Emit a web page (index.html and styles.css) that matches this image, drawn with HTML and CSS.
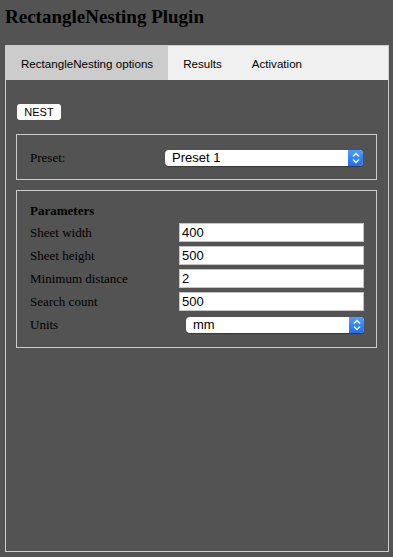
FILE: index.html
```html
<!DOCTYPE html>
<html lang="en">
<head>
  <meta charset="UTF-8">
  <meta name="viewport" content="width=device-width, initial-scale=1.0">
  <title>RectangleNesting Plugin</title>
  <link rel="stylesheet" href="styles.css">
</head>
<body>
  <h1 class="title">RectangleNesting Plugin</h1>

  <div class="panel">
    <!-- tabs -->
    <div class="tabs">
      <div class="tab active">RectangleNesting options</div>
      <div class="tab">Results</div>
      <div class="tab">Activation</div>
    </div>

    <div class="tab-body">
      <button class="btn">NEST</button>

      <!-- preset -->
      <fieldset class="group preset">
        <label>Preset:</label>
        <div class="select">
          <select>
            <option>Preset 1</option>
          </select>
          <span class="arrows">
            <svg width="8" height="12" viewBox="0 0 8 12"><path d="M1 4.5 L4 1.5 L7 4.5 M1 7.5 L4 10.5 L7 7.5" fill="none" stroke="#fff" stroke-width="1.4"/></svg>
          </span>
        </div>
      </fieldset>

      <!-- parameters -->
      <fieldset class="group params">
        <div class="head">Parameters</div>
        <div></div>
        <label>Sheet width</label>
        <input class="field" type="text" value="400">
        <label>Sheet height</label>
        <input class="field" type="text" value="500">
        <label>Minimum distance</label>
        <input class="field" type="text" value="2">
        <label>Search count</label>
        <input class="field" type="text" value="500">
        <label>Units</label>
        <div class="select units">
          <select>
            <option>mm</option>
          </select>
          <span class="arrows">
            <svg width="8" height="12" viewBox="0 0 8 12"><path d="M1 4.5 L4 1.5 L7 4.5 M1 7.5 L4 10.5 L7 7.5" fill="none" stroke="#fff" stroke-width="1.4"/></svg>
          </span>
        </div>
      </fieldset>
    </div>
  </div>
</body>
</html>
```

FILE: styles.css
```css
html, body {
  margin: 0;
  padding: 0;
}
body {
  background: #535353;
  padding: 5px 4px 5px 5px;
  font-family: "Liberation Serif", serif;
  font-size: 13px;
  color: #000;
}
.title {
  font-size: 19px;
  font-weight: bold;
  margin: 0 0 16px 0;
  line-height: 24px;
}
.panel {
  border: 1px solid #cccccc;
  height: 507px;
  box-sizing: border-box;
}
.tabs {
  display: flex;
  height: 34px;
  background: #f0f0f0;
  font-family: "Liberation Sans", sans-serif;
  font-size: 11.6px;
}
.tab {
  padding: 0 15px;
  display: flex;
  align-items: center;
}
.tab.active {
  background: #cccccc;
}
.tab-body {
  padding: 24px 11px 0 10px;
}
.btn {
  display: block;
  margin: 0 0 14px 1px;
  width: 44px;
  height: 16px;
  padding: 0;
  border: none;
  border-radius: 3px;
  background: #fff;
  font-family: "Liberation Sans", sans-serif;
  font-size: 11px;
  color: #000;
}
.group {
  margin: 0 0 10px 0;
  border: 1px solid #cccccc;
  min-width: 0;
  display: grid;
  align-items: center;
}
.preset {
  padding: 13px 13px 12px 13px;
  grid-template-columns: 135px 198px;
  grid-auto-rows: 19px;
}
.params {
  padding: 9px 12px 13px 13px;
  grid-template-columns: 149px 185px;
  grid-auto-rows: 19px;
  row-gap: 4px;
}
.head {
  font-weight: bold;
  padding-top: 2px;
}
.field {
  box-sizing: border-box;
  height: 19px;
  width: 185px;
  border: 1px solid #c4c4c4;
  padding: 0 2px;
  margin: 0;
  font-family: "Liberation Sans", sans-serif;
  font-size: 13px;
  color: #000;
  background: #fff;
}
.select {
  display: flex;
  height: 16px;
  background: #fff;
  border-radius: 4px;
  box-shadow: 0 1px 1px rgba(0, 0, 0, 0.35);
}
.units {
  margin-left: 7px;
}
.select select {
  flex: 1;
  -webkit-appearance: none;
  appearance: none;
  border: none;
  background: transparent;
  padding: 0 0 0 7px;
  margin: 0;
  font-family: "Liberation Sans", sans-serif;
  font-size: 13px;
  color: #000;
  height: 16px;
  line-height: 16px;
  outline: none;
}
.arrows {
  width: 15px;
  display: flex;
  align-items: center;
  justify-content: center;
  background: linear-gradient(#4c9dff, #1c6ff3);
  border-radius: 0 4px 4px 0;
}
```
